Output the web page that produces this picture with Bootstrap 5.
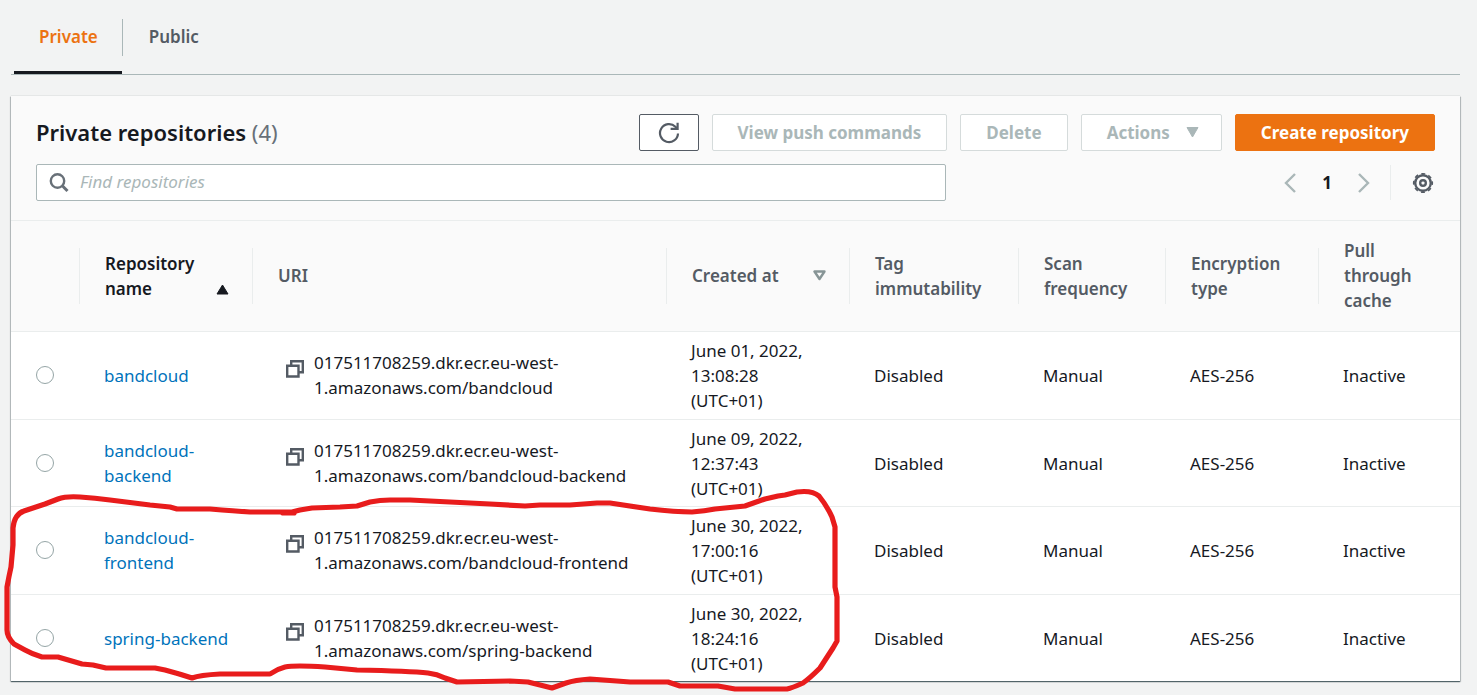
<!DOCTYPE html>
<html lang="en">
<head>
<meta charset="utf-8">
<meta name="viewport" content="width=device-width, initial-scale=1">
<title>Repositories</title>
<link href="https://cdn.jsdelivr.net/npm/bootstrap@5.3.0/dist/css/bootstrap.min.css" rel="stylesheet">
<style>
  body { background: #f2f3f3; color: #16191f; font-family: "Noto Sans", "Open Sans", sans-serif; font-size: 17px; line-height: 25px; }
  .page { padding: 0 17px 12px 11px; }
  .tabs { border-bottom: 1px solid #aab7b8; padding-left: 3px; margin-bottom: 21px; }
  .tabs .nav-link { color: #545b64; font-weight: 600; padding: 24px 27px 22px; border-bottom: 3px solid transparent; position: relative; }
  .tabs .nav-link.active { color: #ec7211; border-bottom-color: #16191f; padding-left: 25px; padding-right: 24px; }
  .tabs .nav-link.active::after { content: ""; position: absolute; right: -1px; top: 19px; height: 37px; border-right: 1px solid #aab7b8; }
  .panel { background: #fff; box-shadow: 0 0 1px 0 rgba(0,28,36,.3), 0 1px 1px 0 rgba(0,28,36,.5), 1px 1px 1px 0 rgba(0,28,36,.15), -1px 1px 1px 0 rgba(0,28,36,.15); position: relative; }
  .panel-top { background: #fafafa; padding: 18px 25px 19px 25px; border-bottom: 1px solid #eaeded; }
  .panel-head { margin-bottom: 13px; }
  h1 { font-size: 22px; font-weight: 600; line-height: 36px; }
  h1 span { font-weight: 400; color: #687078; }
  .tool { font-size: 17px; font-weight: 700; line-height: 25px; padding: 5px 25px; border-radius: 2px; border: 1px solid #545b64; background: #fff; color: #545b64; white-space: nowrap; height: 37px; }
  .tool:disabled { color: #aab7b8; border-color: #d5dbdb; background: #fff; opacity: 1; }
  .tool-icon { padding: 0; width: 60px; }
  .tool-menu { padding-right: 22px; }
  .tool-main, .tool-main:hover { background: #ec7211; border-color: #ec7211; color: #fff; }
  .actions { gap: 13px; }
  .search { width: 910px; height: 37px; position: relative; }
  .search svg { position: absolute; left: 13px; top: 9px; }
  .search .form-control { border: 1px solid #aab7b8; border-radius: 2px; height: 37px; font-size: 17px; padding: 4px 12px 6px 43px; }
  .search .form-control::placeholder { color: #aab7b8; font-style: italic; }
  .plain { border: 0; background: none; padding: 0; display: flex; }
  .pager { gap: 26px; height: 35px; }
  .prefs { border-left: 1px solid #eaeded; padding: 0 1px 0 21px; height: 35px; }
  .repos { table-layout: fixed; margin: 0; --bs-table-bg: transparent; --bs-table-color: #16191f; }
  .repos th { background: #fafafa; color: #545b64; font-weight: 600; height: 110px; padding: 0 23px 0 26px; position: relative; vertical-align: middle; border-bottom: 1px solid #eaeded; }
  .repos th + th::before { content: ""; position: absolute; left: 0; top: 27px; height: 56px; border-left: 1px solid #eaeded; }
  .repos td { padding: 6px 16px 6px 25px; vertical-align: middle; border-bottom: 1px solid #eaeded; }
  .repos tr:nth-child(even) td { padding-bottom: 5px; }
  .repos tr:last-child td { border-bottom: 0; }
  .repos a { color: #0073bb; text-decoration: none; }
  .repos th.sorted { color: #16191f; }
  .sort-up { margin: 0 0 6px -20px; }
  .repos .form-check-input { width: 18px; height: 18px; margin: 0; border: 1px solid #95a5a6; display: block; }
  .c-pick { width: 68px; } .c-name { width: 173px; } .c-date { width: 183px; } .c-tag { width: 169px; }
  .c-scan { width: 147px; } .c-enc { width: 153px; } .c-pull { width: 142px; }
  .repos td.uri { padding-left: 34px; }
  .copy { padding-top: 10px; }
  .marker { position: absolute; left: -11px; bottom: -13px; pointer-events: none; }
</style>
</head>
<body>
<main class="page">
  <nav class="tabs nav">
    <a class="nav-link active" href="#private" aria-current="page">Private</a>
    <a class="nav-link" href="#public">Public</a>
  </nav>

  <section class="panel" id="private">
    <div class="panel-top d-flex flex-column">
      <div class="panel-head d-flex justify-content-between">
        <h1 class="m-0">Private repositories <span>(4)</span></h1>
        <div class="actions d-flex">
          <button class="btn tool tool-icon d-flex align-items-center justify-content-center" type="button" aria-label="Refresh">
            <svg width="22" height="22" viewBox="0 0 22 22" fill="none" stroke="#545b64" stroke-width="2.2"><path d="M20 11.500a9 9 0 1 1-2.600-6.700l2 2"/><path d="M19.600 .8v6h-7"/></svg>
          </button>
          <button class="btn tool" type="button" disabled>View push commands</button>
          <button class="btn tool" type="button" disabled>Delete</button>
          <button class="btn tool tool-menu d-flex align-items-center" type="button" disabled>Actions
            <svg class="ms-3" width="13" height="11" viewBox="0 0 13 11"><path d="M1 .5h11L6.500 10z" fill="#aab7b8" stroke="#aab7b8" stroke-linejoin="round"/></svg>
          </button>
          <button class="btn tool tool-main" type="button">Create repository</button>
        </div>
      </div>
      <div class="d-flex justify-content-between align-items-center">
        <div class="search">
          <input class="form-control" type="search" placeholder="Find repositories" aria-label="Find repositories">
          <svg width="20" height="20" viewBox="0 0 20 20" fill="none" stroke="#687078" stroke-width="2.400"><circle cx="8.500" cy="8" r="6.700"/><path d="M13.300 12.800l5.200 5.200" stroke-width="3"/></svg>
        </div>
        <div class="d-flex align-items-center">
          <div class="pager d-flex align-items-center me-3 pe-1">
            <button class="plain" type="button" aria-label="Previous page"><svg width="12" height="20" viewBox="0 0 12 20" fill="none" stroke="#aab7b8" stroke-width="2.400"><path d="M11 1L2 10l9 9"/></svg></button>
            <span class="fw-bold">1</span>
            <button class="plain" type="button" aria-label="Next page"><svg width="12" height="20" viewBox="0 0 12 20" fill="none" stroke="#aab7b8" stroke-width="2.400"><path d="M1 1l9 9-9 9"/></svg></button>
          </div>
          <div class="prefs d-flex align-items-center">
            <button class="plain" type="button" aria-label="Preferences">
              <svg width="22" height="22" viewBox="-11 -11 22 22" fill="none" stroke="#545b64"><circle r="7.800" stroke-width="2.400"/><circle r="9.300" stroke-width="1.600" stroke-dasharray="3.900 3.404" stroke-dashoffset="1.950"/><circle r="2.800" stroke-width="2.400"/></svg>
            </button>
          </div>
        </div>
      </div>
    </div>

    <table class="table repos">
      <colgroup><col class="c-pick"><col class="c-name"><col><col class="c-date"><col class="c-tag"><col class="c-scan"><col class="c-enc"><col class="c-pull"></colgroup>
      <thead>
        <tr>
          <th aria-label="Select"></th>
          <th class="sorted" aria-sort="ascending"><div class="d-flex justify-content-between align-items-end"><span>Repository<br>name</span><svg class="sort-up flex-shrink-0" width="13" height="11" viewBox="0 0 13 11"><path d="M1 10h11L6.500 1z" fill="#16191f" stroke="#16191f" stroke-linejoin="round"/></svg></div></th>
          <th>URI</th>
          <th><div class="d-flex justify-content-between align-items-center"><span>Created at</span><svg width="13" height="11" viewBox="0 0 13 11"><path d="M1.500 1.500h10L6.500 9z" fill="none" stroke="#879596" stroke-width="2.400" stroke-linejoin="round"/></svg></div></th>
          <th>Tag<br>immutability</th>
          <th>Scan<br>frequency</th>
          <th>Encryption<br>type</th>
          <th>Pull<br>through<br>cache</th>
        </tr>
      </thead>
      <tbody>
        <tr>
          <td><input class="form-check-input" type="radio" name="repo" aria-label="Select bandcloud"></td>
          <td><a href="#bandcloud">bandcloud</a></td>
          <td class="uri"><div class="d-flex gap-2"><button class="plain copy" type="button" aria-label="Copy URI"><svg width="20" height="18" viewBox="0 0 20 18" fill="none" stroke="#545b64" stroke-width="2.400"><path d="M1.200 5.700h11.300v10.800H1.200zM5.200 5V1.200h11.600v11h-4"/></svg></button><span>017511708259.dkr.ecr.eu-west-<br>1.amazonaws.com/bandcloud</span></div></td>
          <td>June 01, 2022,<br>13:08:28<br>(UTC+01)</td>
          <td>Disabled</td><td>Manual</td><td>AES-256</td><td>Inactive</td>
        </tr>
        <tr>
          <td><input class="form-check-input" type="radio" name="repo" aria-label="Select bandcloud-backend"></td>
          <td><a href="#bandcloud-backend">bandcloud-<br>backend</a></td>
          <td class="uri"><div class="d-flex gap-2"><button class="plain copy" type="button" aria-label="Copy URI"><svg width="20" height="18" viewBox="0 0 20 18" fill="none" stroke="#545b64" stroke-width="2.400"><path d="M1.200 5.700h11.300v10.800H1.200zM5.200 5V1.200h11.600v11h-4"/></svg></button><span>017511708259.dkr.ecr.eu-west-<br>1.amazonaws.com/bandcloud-backend</span></div></td>
          <td>June 09, 2022,<br>12:37:43<br>(UTC+01)</td>
          <td>Disabled</td><td>Manual</td><td>AES-256</td><td>Inactive</td>
        </tr>
        <tr>
          <td><input class="form-check-input" type="radio" name="repo" aria-label="Select bandcloud-frontend"></td>
          <td><a href="#bandcloud-frontend">bandcloud-<br>frontend</a></td>
          <td class="uri"><div class="d-flex gap-2"><button class="plain copy" type="button" aria-label="Copy URI"><svg width="20" height="18" viewBox="0 0 20 18" fill="none" stroke="#545b64" stroke-width="2.400"><path d="M1.200 5.700h11.300v10.800H1.200zM5.200 5V1.200h11.600v11h-4"/></svg></button><span>017511708259.dkr.ecr.eu-west-<br>1.amazonaws.com/bandcloud-frontend</span></div></td>
          <td>June 30, 2022,<br>17:00:16<br>(UTC+01)</td>
          <td>Disabled</td><td>Manual</td><td>AES-256</td><td>Inactive</td>
        </tr>
        <tr>
          <td><input class="form-check-input" type="radio" name="repo" aria-label="Select spring-backend"></td>
          <td class="text-nowrap"><a href="#spring-backend">spring-backend</a></td>
          <td class="uri"><div class="d-flex gap-2"><button class="plain copy" type="button" aria-label="Copy URI"><svg width="20" height="18" viewBox="0 0 20 18" fill="none" stroke="#545b64" stroke-width="2.400"><path d="M1.200 5.700h11.300v10.800H1.200zM5.200 5V1.200h11.600v11h-4"/></svg></button><span>017511708259.dkr.ecr.eu-west-<br>1.amazonaws.com/spring-backend</span></div></td>
          <td>June 30, 2022,<br>18:24:16<br>(UTC+01)</td>
          <td>Disabled</td><td>Manual</td><td>AES-256</td><td>Inactive</td>
        </tr>
      </tbody>
    </table>

    <!-- hand-drawn loop around the last two repositories -->
    <svg class="marker" width="845" height="210" viewBox="0 484 845 210" fill="none" stroke="#e81c1c" stroke-width="5.200" stroke-linejoin="round" stroke-linecap="round" aria-hidden="true">
      <path d="M13 528C14 518 18 513 24 511L45 504L58 499Q66 496 80 497Q95 498 110 500L150 505L170 507L177 509H210Q235 511 250 512H283L292 512L300 510L312 508L340 507L357 506L370 502Q380 500 390 500H410L450 502L490 504L525 506L540 505H570L597 503H610L650 509Q675 512 692 512Q705 511 715 509L745 506L765 499L778 496L785 495L797 492Q812 490 819 496Q827 506 832 517L835 527V587L837 597V641L833 648L820 668Q810 678 803 683Q792 688 787 689H735L718 686H680L668 682H630L590 679Q575 680 566 683L552 688L528 682L510 681L457 682L445 678Q437 674 428 673Q410 671 357 670L325 667Q295 665 285 667Q277 669 270 674H220Q200 675 192 678Q180 674 165 670L155 668H106L93 665L82 664L58 657H42Q32 654 25 650L14 644Q7 637 7 630V587Q9 576 11 567L13 545Z"/>
      <path d="M283 513h11"/>
    </svg>
  </section>
</main>
<script src="https://cdn.jsdelivr.net/npm/bootstrap@5.3.0/dist/js/bootstrap.bundle.min.js"></script>
</body>
</html>
